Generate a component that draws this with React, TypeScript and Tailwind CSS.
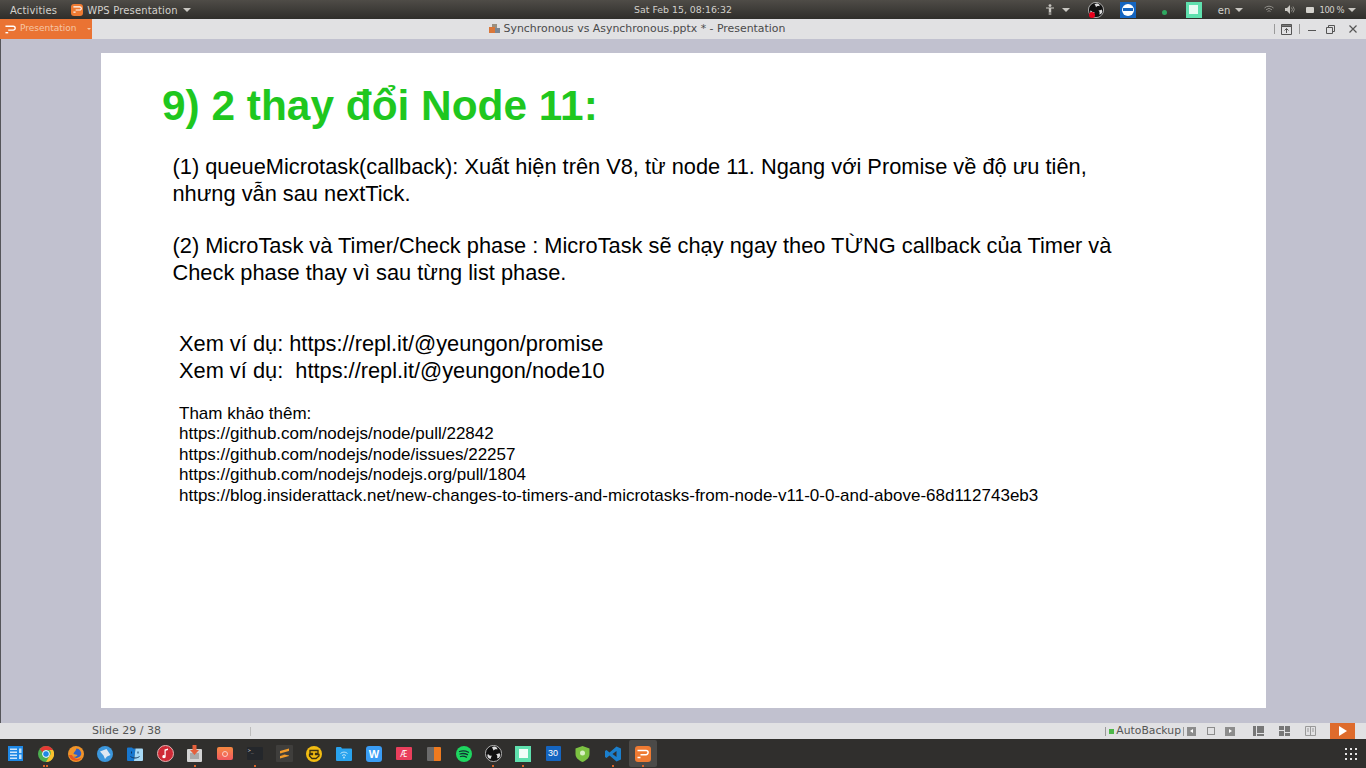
const sans = "font-['Liberation_Sans',Arial,sans-serif]";
const ui = "font-['DejaVu_Sans',sans-serif]";

function Caret({ className = "border-t-[#c9c7c2]" }: { className?: string }) {
  return <span className={`inline-block w-0 h-0 border-x-[4px] border-x-transparent border-t-[4px] ${className}`} />;
}

function PLogo({ size = 12, stroke = "#fff" }: { size?: number; stroke?: string }) {
  return (
    <svg width={size} height={size} viewBox="0 0 12 12" fill="none">
      <path d="M.5 2.500H9a2.100 2.100 0 0 1 0 4.200H3.500" stroke={stroke} strokeWidth="1.500" />
      <path d="M.5 9.500H3.500" stroke={stroke} strokeWidth="1.500" />
    </svg>
  );
}

function ObsIcon({ size = 16 }: { size?: number }) {
  return (
    <svg width={size} height={size} viewBox="0 0 16 16">
      <circle cx="8" cy="8" r="7.600" fill="#111" stroke="#ddd" strokeWidth="0.700" />
      <path d="M6.500 2.500a3 3 0 0 1 5.300 1.800c-1.500-.8-3-.3-3.800 1-.2-1.300-.6-2.200-1.500-2.800Z" fill="#ddd" />
      <path d="M13.500 7.500a3 3 0 0 1-2.300 5c.8-1.400.5-3-.8-3.900 1.300-.1 2.300-.4 3.100-1.100Z" fill="#ddd" />
      <path d="M5.500 13a3 3 0 0 1-2.700-4.700c.7 1.500 2.300 2.200 3.800 1.600-.7 1-1 2-1.100 3.100Z" fill="#ddd" />
    </svg>
  );
}

function TopBar() {
  return (
    <div className={`h-[19px] shrink-0 flex items-center bg-gradient-to-b from-[#4f4c47] to-[#2f2e2b] text-[#d3d1cc] text-[10px] tracking-[0.15px] ${ui}`}>
      <div className="flex-1 basis-0 flex items-center">
        <span className="ml-[10px] pt-px">Activities</span>
        <span className="ml-[14px] w-[12px] h-[12px] rounded-[3px] bg-[#ee7a32] flex items-center justify-center">
          <PLogo size={9} />
        </span>
        <span className="ml-[4px] pt-px">WPS Presentation</span>
        <span className="ml-[5px] flex"><Caret /></span>
      </div>
      <span className="pt-px text-[9.4px] tracking-normal font-medium">Sat Feb 15, 08:16:32</span>
      <div className="flex-1 basis-0 flex items-center justify-end">
        <svg width="10" height="12" viewBox="0 0 10 12" fill="#c9c7c2">
          <circle cx="5" cy="1.600" r="1.400" />
          <path d="M1 3.400h8v1.200H6.200V11H5.400V8H4.600v3h-.8V4.600H1Z" />
        </svg>
        <span className="ml-[7px] flex"><Caret /></span>
        <span className="ml-[18px] flex relative">
          <ObsIcon />
          <span className="absolute left-[1px] bottom-[0px] w-[6px] h-[6px] rounded-full bg-[#e8001c]" />
        </span>
        <span className="ml-[16px] w-[16px] h-[16px] bg-[#1565c0] flex items-center justify-center">
          <span className="w-[12px] h-[12px] rounded-full bg-white flex items-center justify-center">
            <span className="w-[10px] h-[3px] bg-[#1565c0]" />
          </span>
        </span>
        <span className="ml-[26px] mt-[6px] w-[5px] h-[5px] rounded-full bg-[#2fa860]" />
        <span className="ml-[19px] w-[16px] h-[16px] bg-[#5fe0ae] flex items-center justify-center">
          <span className="w-[9px] h-[9px] bg-[#e8fbf3]" />
        </span>
        <span className="ml-[16px] pt-px">en</span>
        <span className="ml-[5px] flex"><Caret /></span>
        <svg className="ml-[21px]" width="10" height="9" viewBox="0 0 10 9" fill="none" stroke="#8f8d88" strokeWidth="1">
          <path d="M.5 3a6.500 6.500 0 0 1 9 0M2 4.800a4.300 4.300 0 0 1 6 0M3.500 6.500a2 2 0 0 1 3 0" />
        </svg>
        <svg className="ml-[11px]" width="10" height="9" viewBox="0 0 10 9" fill="#c9c7c2">
          <path d="M0 3h2l3-3v9L2 6H0Z" />
          <path d="M6.500 2.500a3 3 0 0 1 0 4M8 1.500a4.500 4.500 0 0 1 0 6" stroke="#8f8d88" fill="none" />
        </svg>
        <span className="ml-[11px] w-[8px] h-[6px] rounded-[1px] bg-[#d3d1cc]" />
        <span className="ml-[5px] pt-px text-[8.500px] tracking-[-0.5px]">100 %</span>
        <span className="ml-[4px] mr-[10px] flex"><Caret /></span>
      </div>
    </div>
  );
}

function TitleBar() {
  return (
    <div className={`h-[20px] shrink-0 flex items-center bg-[#e1e1e3] ${ui}`}>
      <div className="w-[92px] h-full bg-[#ea7333] flex items-center pl-[5px] text-[#f6c7a6] text-[9px]">
        <PLogo size={11} />
        <span className="ml-[4px]">Presentation</span>
        <span className="ml-[10px] flex w-0 h-0 border-x-[2px] border-x-transparent border-t-[2px] border-t-[#f6c7a6]" />
      </div>
      <div className="flex-1 flex justify-center items-center text-[#4a4a4a] text-[10.9px] pr-[92px]">
        <svg className="mr-[4px]" width="11" height="11" viewBox="0 0 11 11">
          <rect x="3" y="1" width="5" height="4" fill="#9a8f80" />
          <rect x="0" y="4" width="6" height="6" fill="#d9773a" />
          <rect x="6" y="5" width="5" height="5" fill="#7b8794" />
        </svg>
        <span>Synchronous vs Asynchronous.pptx * - Presentation</span>
      </div>
      <span className="w-px h-[10px] bg-[#9a9a9a]" />
      <svg className="ml-[6px]" width="11" height="11" viewBox="0 0 11 11" fill="none" stroke="#555">
        <path d="M.5 2.500h10v8H.5Z" />
        <path d="M.5.5h10v2H.5Z" fill="#777" />
        <path d="M5.500 9V4.500M3.500 6.500l2-2 2 2" />
      </svg>
      <span className="ml-[7px] w-px h-[10px] bg-[#9a9a9a]" />
      <span className="ml-[8px] w-[8px] h-px bg-[#555] mt-[2px]" />
      <svg className="ml-[10px]" width="9" height="9" viewBox="0 0 9 9" fill="none" stroke="#555">
        <path d="M.5 2.500h6v6h-6ZM2.500 2.500v-2h6v6h-2" />
      </svg>
      <svg className="ml-[14px] mr-[9px]" width="8" height="8" viewBox="0 0 8 8" stroke="#555" strokeWidth="1.200">
        <path d="M.5.5l7 7M7.500.5l-7 7" />
      </svg>
    </div>
  );
}

function Slide() {
  return (
    <div className={`w-[1165px] h-[655px] bg-white text-black ${sans} pl-[61px] pt-[27px]`}>
      <h1 className="text-[42.400px] leading-[52px] font-bold text-[#1fc71f]">9) 2 thay đổi Node 11:</h1>
      <div className="ml-[10.500px] mt-[22px] text-[21.800px] leading-[26.500px]">
        <p>(1) queueMicrotask(callback): Xuất hiện trên V8, từ node 11. Ngang với Promise về độ ưu tiên,</p>
        <p>nhưng vẫn sau nextTick.</p>
        <p className="mt-[26px]">(2) MicroTask và Timer/Check phase : MicroTask sẽ chạy ngay theo TỪNG callback của Timer và</p>
        <p>Check phase thay vì sau từng list phase.</p>
      </div>
      <div className="ml-[17px] mt-[45px] text-[21.800px] leading-[26.500px]">
        <p>Xem ví dụ: https://repl.it/@yeungon/promise</p>
        <p className="whitespace-pre">Xem ví dụ:  https://repl.it/@yeungon/node10</p>
      </div>
      <div className="ml-[17px] mt-[20px] text-[17px] leading-[20.400px]">
        <p>Tham khảo thêm:</p>
        <p>https://github.com/nodejs/node/pull/22842</p>
        <p>https://github.com/nodejs/node/issues/22257</p>
        <p>https://github.com/nodejs/nodejs.org/pull/1804</p>
        <p>https://blog.insiderattack.net/new-changes-to-timers-and-microtasks-from-node-v11-0-0-and-above-68d112743eb3</p>
      </div>
    </div>
  );
}

function StatusBar() {
  const gray = "bg-[#8c8c8c]";
  return (
    <div className={`h-[16px] shrink-0 flex items-center bg-[#e1e1e3] text-[#555] text-[11px] ${ui}`}>
      <span className="ml-[92px] w-[158px]">Slide 29 / 38</span>
      <span className="w-px h-[9px] bg-[#bdbdbd]" />
      <div className="flex-1" />
      <span className="w-px h-[9px] bg-[#999]" />
      <span className="ml-[3px] w-[5px] h-[5px] bg-[#4cb648]" />
      <span className="ml-[2px] text-[10.800px]">AutoBackup</span>
      <span className="ml-[2px] w-px h-[9px] bg-[#999]" />
      <span className={`ml-[3px] w-[9px] h-[9px] ${gray} flex items-center justify-center`}>
        <span className="w-0 h-0 border-y-[2px] border-y-transparent border-r-[3px] border-r-white" />
      </span>
      <span className="ml-[11px] w-[8px] h-[8px] border border-[#8c8c8c]" />
      <span className={`ml-[10px] w-[10px] h-[9px] ${gray} flex items-center justify-center`}>
        <span className="w-0 h-0 border-y-[2px] border-y-transparent border-l-[3px] border-l-white" />
      </span>
      <svg className="ml-[18px]" width="11" height="10" viewBox="0 0 11 10" fill="#777">
        <path d="M0 0h3v10H0ZM4 0h7v7H4ZM4 8h7v2H4Z" />
      </svg>
      <svg className="ml-[15px]" width="11" height="10" viewBox="0 0 11 10" fill="#777">
        <path d="M0 0h5v4H0ZM6 0h5v6H6ZM0 5h5v5H0ZM6 7h5v3H6Z" />
      </svg>
      <svg className="ml-[15px]" width="11" height="10" viewBox="0 0 11 10" fill="none" stroke="#999">
        <path d="M.5.5h10v9H.5ZM5.500.5v9M2 3h2M2 5h2M7 3h2M7 5h2" />
      </svg>
      <span className="ml-[14px] mr-[11px] w-[25px] h-[16px] bg-[#de6b2c] flex items-center justify-center">
        <span className="w-0 h-0 border-y-[5px] border-y-transparent border-l-[8px] border-l-white" />
      </span>
    </div>
  );
}

function DockIcon({ children, dots = 0, active = false }: { children: React.ReactNode; dots?: number; active?: boolean }) {
  return (
    <div className="relative w-[29.850px] h-[29px] shrink-0 flex items-center justify-center">
      {active && <span className="absolute inset-x-[1px] inset-y-[1px] bg-[#4b4a48] rounded-[2px]" />}
      <span className="relative flex">{children}</span>
      {dots > 0 && (
        <span className="absolute bottom-[1px] left-0 right-0 flex justify-center gap-[1px]">
          {Array.from({ length: dots }).map((_, i) => (
            <span key={i} className="w-[2px] h-[2px] bg-[#d9632a]" />
          ))}
        </span>
      )}
    </div>
  );
}

function Dock() {
  return (
    <div className="h-[29px] shrink-0 flex items-center bg-[#302f2d] pl-[1px]">
      <DockIcon>
        <svg width="15" height="15" viewBox="0 0 15 15">
          <rect width="15" height="15" fill="#1e88e5" />
          <path d="M2 2.500h7v1.500H2ZM2 5.500h7V7H2ZM2 8.500h7V10H2ZM2 11.500h7V13H2Z" fill="#cfe6fb" />
          <path d="M11 2.500h2.500V7H11ZM11 8.500h2.500V13H11Z" fill="#bfe0fa" />
        </svg>
      </DockIcon>
      <DockIcon dots={2}>
        <svg width="16" height="16" viewBox="0 0 16 16">
          <circle cx="8" cy="8" r="8" fill="#4caf50" />
          <path d="M8 0a8 8 0 0 1 7 4H8a4 4 0 0 0-3.600 2.200L1.800 3A8 8 0 0 1 8 0Z" fill="#e53935" />
          <path d="M15 4a8 8 0 0 1-7 12l3.400-6A4 4 0 0 0 11.500 4Z" fill="#fbc02d" />
          <circle cx="8" cy="8" r="3.400" fill="#1e88e5" stroke="#fff" />
        </svg>
      </DockIcon>
      <DockIcon>
        <svg width="16" height="16" viewBox="0 0 16 16">
          <circle cx="8" cy="8" r="8" fill="#f0942a" />
          <path d="M8.500 2.500a5 5 0 0 1 4.500 6.500 5 5 0 0 1-8 1.500c2 .8 4 .2 4.500-1.500L5.500 8c0-1.500 2-2.500 3-5.500Z" fill="#2f5fc4" />
          <path d="M1 9a7 7 0 0 0 13 2A6 6 0 0 1 4 9Z" fill="#e8541e" />
        </svg>
      </DockIcon>
      <DockIcon>
        <svg width="16" height="16" viewBox="0 0 16 16">
          <circle cx="8" cy="8" r="8" fill="#3c97dd" />
          <path d="M3 5.500L9.500 3l4 6-3.500 1.500L8 13 6.500 9.500Z" fill="#dfe8f2" />
        </svg>
      </DockIcon>
      <DockIcon>
        <svg width="16" height="15" viewBox="0 0 16 15">
          <path d="M0 2.500a1 1 0 0 1 1-1h4l1 1h2.500L7 15H1a1 1 0 0 1-1-1Z" fill="#1777cf" />
          <path d="M8.500 2.500H15a1 1 0 0 1 1 1V14a1 1 0 0 1-1 1H7Z" fill="#a8daf6" />
          <path d="M4.500 5.500v2M11 5.500v2" stroke="#12365c" />
          <path d="M3.500 10.500c2.500 2 6.500 2 9 0" stroke="#12365c" fill="none" />
        </svg>
      </DockIcon>
      <DockIcon>
        <svg width="17" height="17" viewBox="0 0 17 17">
          <circle cx="8.500" cy="8.500" r="8" fill="#cf2a36" stroke="#e3b3b3" />
          <path d="M7.500 4.500l3.500-1v1.500L8.700 5.700V11.500a1.700 1.500 0 1 1-1.200-1.300Z" fill="#fff" />
        </svg>
      </DockIcon>
      <DockIcon dots={1}>
        <svg width="15" height="17" viewBox="0 0 15 17">
          <rect x="0" y="4" width="15" height="13" rx="1" fill="#d3d3d3" />
          <rect x="3" y="8" width="9" height="6" fill="#a9a9a9" />
          <path d="M5.500 0h4v5h2.500L7.500 10 3 5h2.500Z" fill="#e5603c" />
        </svg>
      </DockIcon>
      <DockIcon>
        <span className="w-[16px] h-[13px] rounded-[2px] bg-gradient-to-b from-[#f5883f] to-[#f2585f] flex items-center justify-center">
          <span className="w-[6px] h-[6px] rounded-full border border-[#fbd0ca]" />
        </span>
      </DockIcon>
      <DockIcon dots={1}>
        <span className="w-[16px] h-[13px] bg-[#24272b] rounded-[1px] text-[#ccc] text-[5px] leading-[7px] pl-[1px] font-['DejaVu_Sans_Mono',monospace]">&gt;_</span>
      </DockIcon>
      <DockIcon>
        <span className="w-[17px] h-[17px] bg-[#3f3e3c] rounded-[1px] flex items-center justify-center">
          <svg width="9" height="11" viewBox="0 0 9 11" fill="#f29b2a">
            <path d="M0 3L9 .5V3L0 5.500ZM0 5.500L9 7.500V8L0 10.500V8L4.500 6.800 0 5.500Z" />
          </svg>
        </span>
      </DockIcon>
      <DockIcon>
        <svg width="16" height="16" viewBox="0 0 16 16">
          <circle cx="8" cy="8" r="8" fill="#f3bd12" />
          <path d="M4 4.500h8v3H9.500v1H13v1.500l-3 2.500H6l-2.500-2.500V8.500H6.500v-1H4Z" fill="none" stroke="#3a2f12" strokeWidth="1.300" />
        </svg>
      </DockIcon>
      <DockIcon>
        <svg width="16" height="14" viewBox="0 0 16 14">
          <path d="M0 1a1 1 0 0 1 1-1h4l1 1.500h9a1 1 0 0 1 1 1V13a1 1 0 0 1-1 1H1a1 1 0 0 1-1-1Z" fill="#29a3ee" />
          <path d="M4.500 6.500a5 5 0 0 1 7 0M6 8.500a3 3 0 0 1 4 0" stroke="#b5e2fb" fill="none" />
          <circle cx="8" cy="10.500" r="1" fill="#b5e2fb" />
        </svg>
      </DockIcon>
      <DockIcon>
        <span className="w-[16px] h-[16px] bg-[#3a9df5] rounded-[3px] text-white text-[11px] leading-[16px] text-center font-bold font-['Liberation_Sans',sans-serif]">W</span>
      </DockIcon>
      <DockIcon>
        <span className="w-[16px] h-[13px] bg-[#ea3f5c] rounded-[1px] text-white text-[8px] leading-[13px] text-center">Æ</span>
      </DockIcon>
      <DockIcon>
        <span className="w-[14px] h-[14px] flex rounded-[1px] overflow-hidden">
          <span className="w-1/2 bg-[#6b6b6b]" />
          <span className="w-1/2 bg-[#ee7a1f]" />
        </span>
      </DockIcon>
      <DockIcon>
        <svg width="16" height="16" viewBox="0 0 16 16" fill="none">
          <circle cx="8" cy="8" r="8" fill="#1ed760" />
          <path d="M3.500 5.500c3-1 6-.8 9 .8M4 8c2.500-.8 5-.6 7.500.7M4.500 10.500c2-.6 4-.4 6 .6" stroke="#133" strokeWidth="1.300" strokeLinecap="round" />
        </svg>
      </DockIcon>
      <DockIcon dots={1}>
        <ObsIcon size={17} />
      </DockIcon>
      <DockIcon dots={1}>
        <span className="w-[16px] h-[16px] bg-[#5fe0ae] flex items-center justify-center">
          <span className="w-[9px] h-[9px] bg-[#f2fdf8]" />
        </span>
      </DockIcon>
      <DockIcon>
        <span className="w-[15px] h-[15px] bg-[#1565c0] rounded-[1px] text-white text-[9px] leading-[15px] text-center font-['Liberation_Sans',sans-serif]">30</span>
      </DockIcon>
      <DockIcon>
        <svg width="15" height="16" viewBox="0 0 15 16">
          <path d="M7.500 0l7 2.500V8c0 4-3.500 6.500-7 8-3.500-1.500-7-4-7-8V2.500Z" fill="#7cc242" />
          <circle cx="7.500" cy="7" r="2.500" fill="#d9f0c4" />
        </svg>
      </DockIcon>
      <DockIcon dots={1}>
        <svg width="16" height="16" viewBox="0 0 16 16">
          <path d="M11.500 0.500L16 2.500v11l-4.500 2L4.500 9.500 1.500 12 0 11V5l1.500-1 3 2.500Z" fill="#1b7fcc" />
          <path d="M11.500 5L7.500 8l4 3Z" fill="#302f2d" />
        </svg>
      </DockIcon>
      <DockIcon dots={1} active>
        <span className="w-[16px] h-[16px] bg-[#ee7a32] rounded-[3px] flex items-center justify-center">
          <PLogo size={12} />
        </span>
      </DockIcon>
      <div className="flex-1" />
      <div className="mr-[9px] grid grid-cols-3 gap-[3px]">
        {Array.from({ length: 9 }).map((_, i) => (
          <span key={i} className="w-[2px] h-[2px] bg-[#e5e5e5]" />
        ))}
      </div>
    </div>
  );
}

export default function App() {
  return (
    <div className="w-[1366px] h-[768px] overflow-hidden flex flex-col bg-[#c1c1cf]">
      <TopBar />
      <TitleBar />
      <div className="flex-1 pl-[100px] pt-[14px] border-l border-[#55555a]">
        <Slide />
      </div>
      <StatusBar />
      <Dock />
    </div>
  );
}
